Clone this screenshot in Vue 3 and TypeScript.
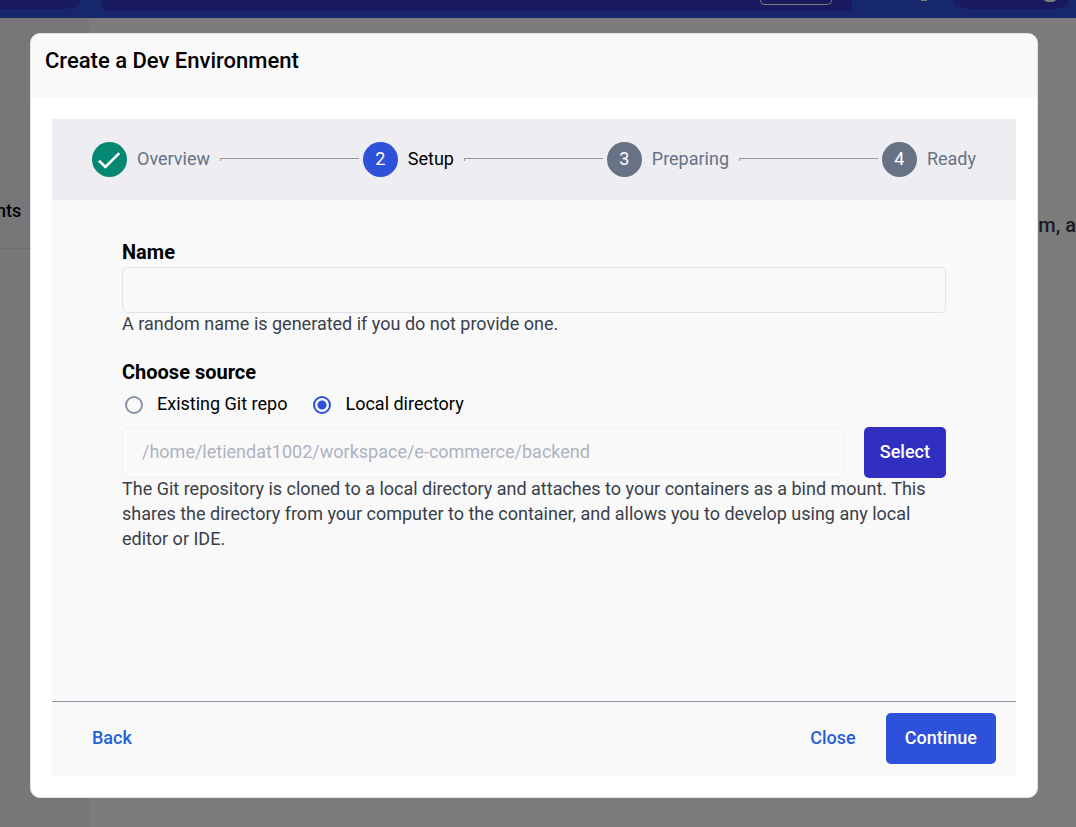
<script setup lang="ts">
import { ref } from 'vue'

interface Step {
  label: string
  state: 'done' | 'active' | 'todo'
}

const steps: Step[] = [
  { label: 'Overview', state: 'done' },
  { label: 'Setup', state: 'active' },
  { label: 'Preparing', state: 'todo' },
  { label: 'Ready', state: 'todo' },
]

const envName = ref('')
const source = ref<'git' | 'local'>('local')
const directory = ref('/home/letiendat1002/workspace/e-commerce/backend')
</script>

<template>
  <div class="screen">
    <div class="backdrop">
      <header class="topbar">
        <span class="brand"></span>
        <span class="search"><span class="shortcut"></span></span>
        <span class="tools"><span class="dot"></span></span>
        <span class="account"><span class="avatar"></span></span>
      </header>
      <div class="behind">
        <aside class="sidebar"><p class="nav-item"><span>nts</span></p></aside>
        <p class="behind-text">m, a</p>
      </div>
    </div>

    <div class="overlay">
      <section class="dialog" role="dialog" aria-labelledby="dialog-title">
        <header class="dialog-head">
          <h1 id="dialog-title">Create a Dev Environment</h1>
        </header>
        <div class="panel">
          <ol class="stepper">
            <li v-for="(step, i) in steps" :key="step.label" class="step" :class="step.state">
              <span class="badge">
                <svg v-if="step.state === 'done'" viewBox="0 0 35 35" width="35" height="35" aria-hidden="true">
                  <path d="M7 18.8 L13.4 25 L27.3 11.2" fill="none" stroke="#fff" stroke-width="2.6" />
                </svg>
                <span v-else class="number">{{ i + 1 }}</span>
              </span>
              <span class="step-label">{{ step.label }}</span>
              <span v-if="i < steps.length - 1" class="connector"></span>
            </li>
          </ol>

          <form id="setup" class="form" @submit.prevent>
            <label class="heading" for="env-name">Name</label>
            <input id="env-name" v-model="envName" class="field" type="text" />
            <p class="help">A random name is generated if you do not provide one.</p>

            <fieldset class="source">
              <legend class="heading">Choose source</legend>
              <div class="options">
                <label class="option">
                  <input v-model="source" type="radio" name="source" value="git" />
                  <span>Existing Git repo</span>
                </label>
                <label class="option">
                  <input v-model="source" type="radio" name="source" value="local" />
                  <span>Local directory</span>
                </label>
              </div>
              <div class="picker">
                <input v-model="directory" class="field path" type="text" aria-label="Local directory path" disabled />
                <button type="button" class="button select">Select</button>
              </div>
            </fieldset>
            <p class="help">
              The Git repository is cloned to a local directory and attaches to your containers as a bind mount. This
              shares the directory from your computer to the container, and allows you to develop using any local editor
              or IDE.
            </p>
          </form>

          <footer class="actions">
            <button type="button" class="button text back">Back</button>
            <button type="button" class="button text">Close</button>
            <button type="submit" form="setup" class="button primary">Continue</button>
          </footer>
        </div>
      </section>
    </div>
  </div>
</template>

<style>
body {
  background: #7c7c7c;
}
</style>

<style scoped>
* {
  box-sizing: border-box;
}

.screen {
  display: grid;
  min-height: 100vh;
  font-family: Roboto, 'Liberation Sans', sans-serif;
  font-size: 18px;
  line-height: 25px;
  color: #000;
}

.backdrop,
.overlay {
  grid-area: 1 / 1;
  min-width: 0;
}

h1,
p,
ol,
fieldset,
legend {
  margin: 0;
  padding: 0;
  border: 0;
}

/* Dimmed page */
.backdrop {
  display: flex;
  flex-direction: column;
  background: #7c7c7c;
  overflow: hidden;
}

.topbar {
  display: flex;
  align-items: flex-start;
  height: 18px;
  background: #17276b;
}

.brand {
  width: 80px;
  height: 9px;
  margin-right: 22px;
  background: #19195f;
  border-bottom-right-radius: 16px 9px;
}

.search {
  display: flex;
  flex: 1;
  justify-content: flex-end;
  height: 11px;
  padding-right: 20px;
  background: #19195f;
  border-radius: 0 0 5px 5px;
}

.shortcut {
  width: 72px;
  height: 5px;
  border: 1px solid #7c7c7c;
  border-top: 0;
  border-radius: 0 0 5px 5px;
}

.tools {
  display: flex;
  justify-content: flex-end;
  width: 101px;
  padding-right: 26px;
}

.dot {
  width: 6px;
  height: 1px;
  background: #7c7c7c;
}

.account {
  display: flex;
  justify-content: flex-end;
  width: 116px;
  height: 9px;
  margin-right: 7px;
  padding-right: 13px;
  background: #19195f;
  border-radius: 0 0 16px 16px / 0 0 9px 9px;
}

.avatar {
  width: 12px;
  height: 2px;
  background: #7c7c7c;
  border-radius: 0 0 6px 6px / 0 0 2px 2px;
}

.behind {
  display: flex;
  flex: 1;
  justify-content: space-between;
}

.sidebar {
  width: 89px;
  background: #77777a;
}

.nav-item {
  height: 231px;
  padding-top: 180px;
  border-bottom: 1px solid #6d6d70;
  font-weight: 500;
}

.nav-item span {
  margin-left: -4px;
}

.behind-text {
  padding-top: 195px;
  font-size: 20px;
  font-weight: 500;
  color: #1b1c22;
}

/* Dialog */
.overlay {
  display: flex;
  padding: 33px 38px 29px 30px;
  z-index: 1;
}

.dialog {
  display: flex;
  flex: 1;
  flex-direction: column;
  min-width: 0;
  background: #fff;
  border: 1px solid #e1e2e6;
  border-radius: 10px;
  overflow: hidden;
}

.dialog-head {
  padding: 13px 14px 23px;
  background: #f9f9fa;
}

h1 {
  font-size: 22px;
  font-weight: 500;
  line-height: 28px;
}

.panel {
  display: flex;
  flex: 1;
  flex-direction: column;
  margin: 21px;
  background: #f9f9fa;
}

.stepper {
  display: flex;
  gap: 4px;
  padding: 23px 40px;
  background: #eeedf2;
  list-style: none;
}

.step {
  display: flex;
  flex: 1 1 auto;
  align-items: center;
  gap: 10px;
  color: #677285;
}

.step:last-child {
  flex: none;
}

.badge {
  display: grid;
  place-items: center;
  width: 35px;
  height: 35px;
  background: #677285;
  border-radius: 50%;
  color: #fff;
}

.number,
.step-label {
  padding-bottom: 3px;
}

.done .badge {
  background: #058873;
}

.active .badge {
  background: #2e51da;
}

.active .step-label {
  color: #000;
}

.connector {
  flex: 1;
  height: 3px;
  border: solid #949996;
  border-width: 1px 0 0 1px;
}

.form {
  flex: 1;
  padding: 40px 70px;
}

.heading {
  display: block;
  font-size: 20px;
  font-weight: 700;
  line-height: 24px;
}

.field {
  display: block;
  width: 100%;
  height: 46px;
  margin-top: 3px;
  padding: 0 19px 3px;
  background: transparent;
  border: 1px solid #e1e2e6;
  border-radius: 5px;
  font: inherit;
  color: #000;
}

.help {
  margin-top: -2px;
  color: #393f49;
}

.source {
  min-width: 0;
  margin-top: 24px;
}

.options {
  display: flex;
  gap: 23px;
  padding: 8px 0 10px;
}

.option {
  display: flex;
  align-items: center;
  gap: 14px;
  height: 25px;
}

.option span {
  padding-bottom: 3px;
}

.option input {
  appearance: none;
  width: 18px;
  height: 18px;
  margin: 0 0 0 3px;
  border: 2px solid #8993a5;
  border-radius: 50%;
}

.option input:checked {
  border-color: #2e51da;
  background: radial-gradient(circle, #2e51da 4px, transparent 5px);
}

.picker {
  display: flex;
  gap: 20px;
}

.path {
  flex: 1;
  min-width: 0;
  height: 51px;
  margin: 0;
  border-color: #eeeff1;
  color: #adb3be;
}

.button {
  height: 51px;
  padding: 0 19px 3px;
  border: 0;
  border-radius: 5px;
  font: inherit;
  font-weight: 500;
  color: #fff;
  cursor: pointer;
}

.select {
  padding: 0 16px 3px;
  background: #312fbf;
}

.primary {
  background: #2e51da;
}

.actions {
  display: flex;
  gap: 30px;
  padding: 11px 20px 12px 40px;
  border-top: 1px solid #8993a5;
}

.text {
  padding: 0 0 3px;
  background: none;
  color: #2560d8;
}

.back {
  margin-right: auto;
}
</style>
